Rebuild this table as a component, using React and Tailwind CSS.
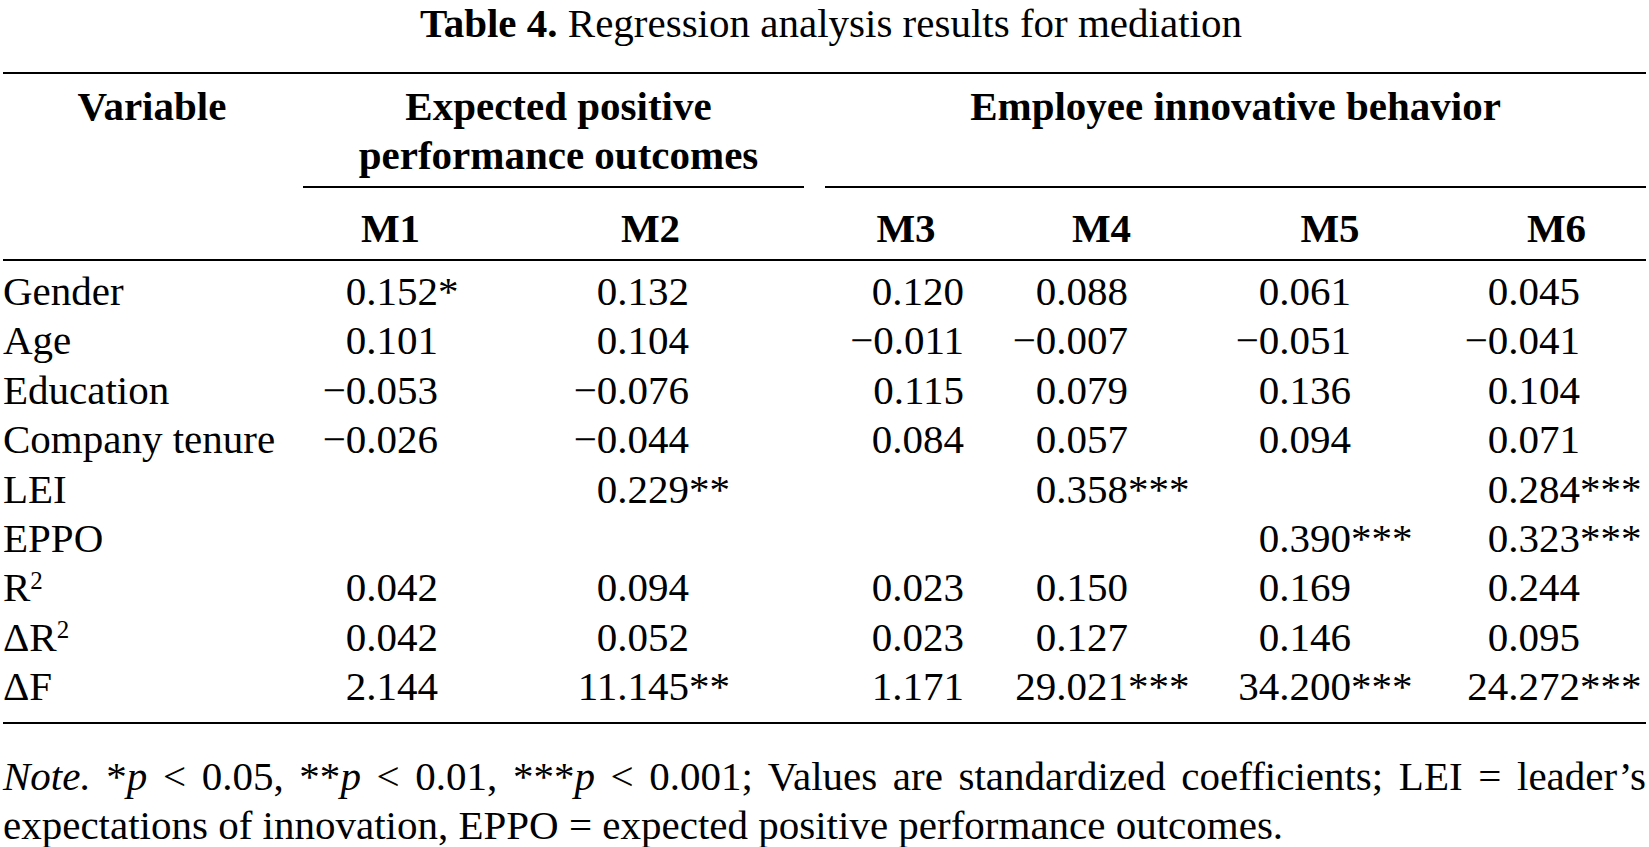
import React from 'react';

const rows = [
  { label: 'Gender', values: ['0.152*', '0.132', '0.120', '0.088', '0.061', '0.045'] },
  { label: 'Age', values: ['0.101', '0.104', '−0.011', '−0.007', '−0.051', '−0.041'] },
  { label: 'Education', values: ['−0.053', '−0.076', '0.115', '0.079', '0.136', '0.104'] },
  { label: 'Company tenure', values: ['−0.026', '−0.044', '0.084', '0.057', '0.094', '0.071'] },
  { label: 'LEI', values: ['', '0.229**', '', '0.358***', '', '0.284***'] },
  { label: 'EPPO', values: ['', '', '', '', '0.390***', '0.323***'] },
  { label: 'R2', values: ['0.042', '0.094', '0.023', '0.150', '0.169', '0.244'] },
  { label: 'dR2', values: ['0.042', '0.052', '0.023', '0.127', '0.146', '0.095'] },
  { label: 'dF', values: ['2.144', '11.145**', '1.171', '29.021***', '34.200***', '24.272***'] },
];

const RowLabel = ({ label }) => {
  // R squared labels need a superscript
  if (label === 'R2') {
    return (
      <span>
        R<sup className="text-[25px]">2</sup>
      </span>
    );
  }
  if (label === 'dR2') {
    return (
      <span>
        ΔR<sup className="text-[25px]">2</sup>
      </span>
    );
  }
  if (label === 'dF') return <span>ΔF</span>;
  return <span>{label}</span>;
};

const Cells = ({ value }) => {
  const m = value.match(/^([^*]*)(\**)$/);
  return (
    <>
      <div className="flex justify-end whitespace-nowrap">
        <span>{m[1]}</span>
      </div>
      <div className="whitespace-nowrap">{m[2]}</div>
    </>
  );
};

export default function App() {
  return (
    <div className="w-[1649px] h-[847px] overflow-hidden bg-white text-black font-['Liberation_Serif','Times_New_Roman',serif] text-[41px]">
      <div className="ml-[3px] w-[1643px]">
        {/* Caption */}
        <div className="h-[46px] leading-[46px] text-center pl-[13px] whitespace-nowrap">
          <span className="font-bold">Table 4.</span> Regression analysis results for mediation
        </div>

        <div className="mt-[26px] h-[2px] bg-black" />

        {/* Group headers */}
        <div className="grid grid-cols-[279px_501px_821px] gap-x-[21px] font-bold leading-[49px]">
          <div className="pt-[8px] pl-[19px] text-center">Variable</div>
          <div className="pt-[8px] pb-[6px] border-b-2 border-black text-center pl-[10px]">
            Expected positive
            <br />
            performance outcomes
          </div>
          <div className="pt-[8px] pb-[6px] border-b-2 border-black text-center">
            Employee innovative behavior
          </div>
        </div>

        {/* Model headers */}
        <div className="grid grid-cols-[300px_175px_345px_166px_225px_232px_200px] pt-[16px] pb-[6px] border-b-2 border-black font-bold leading-[49px] text-center">
          <div />
          <div>M1</div>
          <div>M2</div>
          <div>M3</div>
          <div>M4</div>
          <div>M5</div>
          <div className="pl-[21px]">M6</div>
        </div>

        {/* Body */}
        <div className="pt-[6px] pb-[10px] border-b-2 border-black">
          {rows.map((row) => (
            <div
              key={row.label}
              className="grid grid-cols-[300px_135px_60px_191px_60px_215px_40px_124px_62px_161px_62px_167px_66px] leading-[49.4px]"
            >
              <div className="whitespace-nowrap">
                <RowLabel label={row.label} />
              </div>
              {row.values.map((v, i) => (
                <Cells key={i} value={v} />
              ))}
            </div>
          ))}
        </div>

        {/* Note */}
        <div className="mt-[28px] leading-[49px]">
          <div className="text-justify [text-align-last:justify] whitespace-nowrap">
            <i>Note.</i> *<i>p</i> &lt; 0.05, **<i>p</i> &lt; 0.01, ***<i>p</i> &lt; 0.001; Values are standardized coefficients; LEI = leader’s
          </div>
          <div className="whitespace-nowrap">
            expectations of innovation, EPPO = expected positive performance outcomes.
          </div>
        </div>
      </div>
    </div>
  );
}
